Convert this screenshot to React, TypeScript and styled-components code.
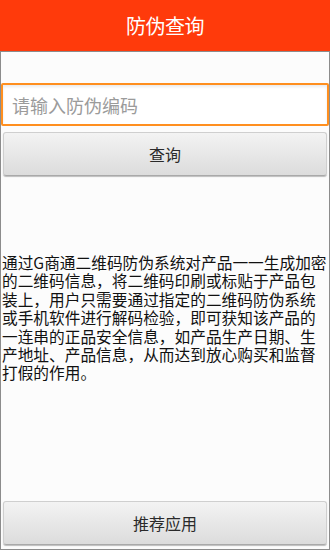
import React from 'react';
import styled, { createGlobalStyle } from 'styled-components';

const GlobalStyle = createGlobalStyle`
  html, body {
    margin: 0;
    padding: 0;
    background: #fbfbfb;
  }
  body {
    font-family: "Noto Sans CJK SC", "Noto Sans", sans-serif;
  }
  * {
    box-sizing: border-box;
  }
`;

const Screen = styled.div`
  width: 330px;
  height: 550px;
  display: flex;
  flex-direction: column;
  overflow: hidden;
`;

const Header = styled.header`
  height: 51px;
  flex-shrink: 0;
  background: #ff3a0b;
  display: flex;
  align-items: center;
  justify-content: center;
  color: #ffffff;
  font-size: 20px;
  letter-spacing: -0.5px;
`;

const Body = styled.main`
  flex: 1;
  display: flex;
  flex-direction: column;
  border: 1px solid #8c8c8c;
  background: #fcfcfc;
  padding: 31px 0 4px;
`;

const CodeInput = styled.input`
  height: 43px;
  width: 100%;
  border: 2px solid #ff8f1f;
  border-radius: 2px;
  background: #ffffff;
  box-shadow: inset 0 2px 3px rgba(0, 0, 0, 0.08);
  padding: 0 9px;
  font-family: inherit;
  font-size: 18px;
  color: #222;
  outline: none;

  &::placeholder {
    color: #9b9b9b;
  }
`;

const GrayButton = styled.button<{ $top?: number }>`
  display: block;
  height: 44px;
  margin: ${p => p.$top ?? 0}px 2px 0;
  width: calc(100% - 4px);
  border: 1px solid #cfcfcf;
  border-bottom-color: #a9a9a9;
  border-radius: 3px;
  background: linear-gradient(#f3f3f3, #dcdcdc);
  box-shadow: 0 1px 1px rgba(0, 0, 0, 0.25);
  font-family: inherit;
  font-size: 16px;
  color: #2a2a2a;
  padding: 0;
`;

const Intro = styled.p`
  margin: 78px 0 0;
  padding: 0 0 0 1px;
  font-size: 15.7px;
  line-height: 18.4px;
  color: #111111;
`;

const Footer = styled.div`
  margin-top: auto;
`;

export default function App() {
  return (
    <>
      <GlobalStyle />
      <Screen>
        <Header>防伪查询</Header>
        <Body>
          <CodeInput placeholder="请输入防伪编码" />
          <GrayButton $top={6}>查询</GrayButton>
          <Intro>
            通过G商通二维码防伪系统对产品一一生成加密的二维码信息，将二维码印刷或标贴于产品包装上，用户只需要通过指定的二维码防伪系统或手机软件进行解码检验，即可获知该产品的一连串的正品安全信息，如产品生产日期、生产地址、产品信息，从而达到放心购买和监督打假的作用。
          </Intro>
          <Footer>
            <GrayButton>推荐应用</GrayButton>
          </Footer>
        </Body>
      </Screen>
    </>
  );
}
